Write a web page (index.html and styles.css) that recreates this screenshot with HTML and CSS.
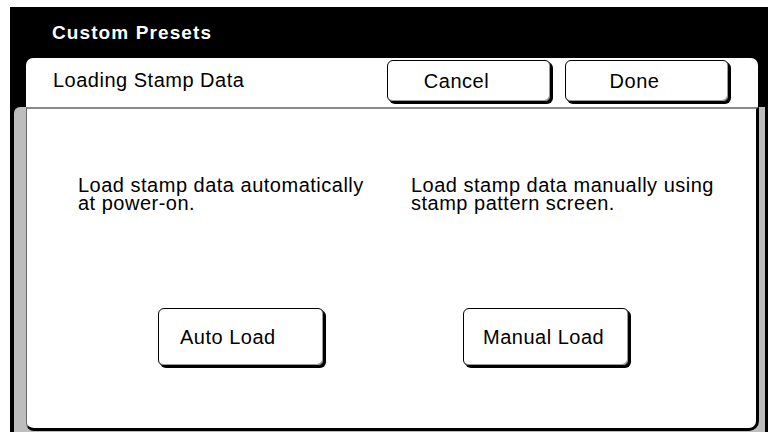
FILE: index.html
```html
<!DOCTYPE html>
<html lang="en">
<head>
  <meta charset="UTF-8">
  <title>Custom Presets</title>
  <link rel="stylesheet" href="styles.css">
</head>
<body>
  <div class="screen">
    <div class="titlebar">Custom Presets</div>

    <!-- Tab header with the page actions -->
    <div class="tab">
      <span class="tab-label">Loading Stamp Data</span>
      <div class="tab-actions">
        <button class="btn btn-small">Cancel</button>
        <button class="btn btn-small">Done</button>
      </div>
    </div>

    <div class="well">
      <div class="panel">
        <div class="option">
          <p>Load stamp data automatically<br>at power-on.</p>
          <button class="btn btn-large btn-auto">Auto Load</button>
        </div>
        <div class="option">
          <p>Load stamp data manually using<br>stamp pattern screen.</p>
          <button class="btn btn-large btn-manual">Manual Load</button>
        </div>
      </div>
    </div>
  </div>
</body>
</html>
```

FILE: styles.css
```css
body {
  margin: 0;
  background-color: #fff;
  font-family: "Liberation Sans", Arial, sans-serif;
  font-size: 20px;
  letter-spacing: 0.5px;
  color: #000;
}
.screen {
  margin: 7px 0 0 10px;
  height: 425px;
  background-color: #000;
  display: flex;
  flex-direction: column;
}
.titlebar {
  height: 51px;
  display: flex;
  align-items: center;
  padding-left: 42px;
  color: #fff;
  font-weight: bold;
  font-size: 19px;
  letter-spacing: 1.1px;
}
.tab {
  margin-left: 16px;
  width: 732px;
  height: 49px;
  box-sizing: border-box;
  padding: 2px 0 0 27px;
  background-color: #fff;
  border-radius: 7px 7px 0 0;
  display: flex;
  align-items: flex-start;
}
.tab-label {
  line-height: 42px;
  margin-top: -1px;
}
.tab-actions {
  margin-left: auto;
  margin-right: 29px;
  display: flex;
  gap: 14px;
}
.btn {
  box-sizing: border-box;
  background-color: #fff;
  border: 1px solid #000;
  border-radius: 6px;
  box-shadow: inset -1px -1px 0 #9a9a9a, 2px 2px 0 #000;
  font: inherit;
  letter-spacing: inherit;
  color: #000;
  padding: 0;
  cursor: pointer;
}
.btn-small {
  width: 164px;
  height: 42px;
  padding-right: 25px;
}
.btn-large {
  width: 166px;
  height: 58px;
  margin-top: 96px;
  text-align: left;
  padding-left: 21px;
}
.btn-auto {
  margin-left: 80px;
}
.btn-manual {
  margin-left: 52px;
  padding-left: 19px;
}
.well {
  flex: 1;
  margin: 0 3px 0 4px;
  padding: 0 6px 1px 12px;
  background-color: #bdbdbd;
  border-radius: 6px 0 0 0;
  display: flex;
}
.panel {
  flex: 1;
  background-color: #fff;
  border-top: 2px solid #8a8a8a;
  border-left: 1px solid #6a6a6a;
  border-right: 3px solid #000;
  border-bottom: 3px solid #000;
  border-radius: 0 0 10px 8px;
  padding: 67px 0 0 51px;
  display: grid;
  grid-template-columns: 333px 1fr;
  align-items: start;
}
.option {
  display: flex;
  flex-direction: column;
  align-items: flex-start;
}
.option p {
  margin: 0;
  line-height: 18px;
}
```
